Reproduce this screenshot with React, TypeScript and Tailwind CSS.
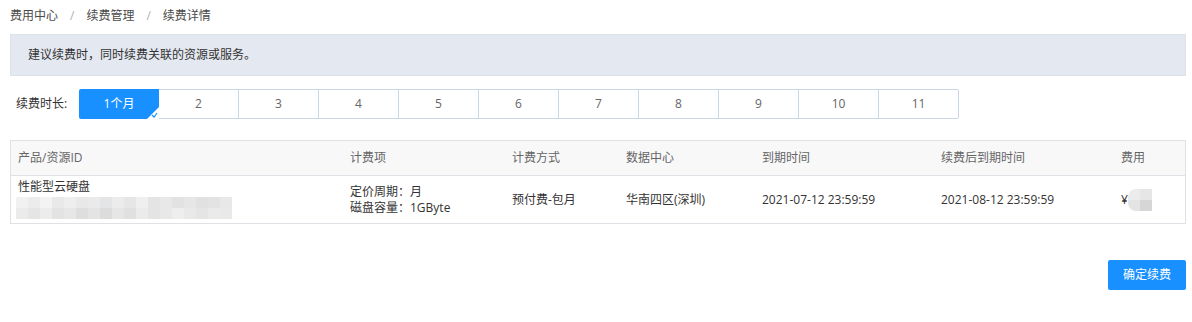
import React from "react";

const ff = { fontFamily: '"Open Sans", "Noto Sans CJK SC", sans-serif' };

function Blur({ cols }: { cols: string[][] }) {
  return (
    <div className="flex flex-col">
      {cols.map((row, i) => (
        <div key={i} className="flex">
          {row.map((c, j) => (
            <div key={j} className="h-[11px] w-[12px]" style={{ background: c }} />
          ))}
        </div>
      ))}
    </div>
  );
}

export default function App() {
  const months = ["1个月", "2", "3", "4", "5", "6", "7", "8", "9", "10", "11"];
  const r1 = ["#f1f1f1", "#ececec", "#f3f3f3", "#e9e9e9", "#eeeeee", "#e8e8e8", "#eaeaea", "#e3e5e6", "#ececec", "#e6e6e6", "#efefef", "#e4e4e4", "#e8e8e8", "#e2e2e2", "#e6e6e6", "#e1e1e1", "#e3e3e3", "#e8e8e8"];
  const r2 = ["#ebebeb", "#e5e5e5", "#ececec", "#e3e3e3", "#e7e7e7", "#dedede", "#e4e4e4", "#dcdcdc", "#e6e6e6", "#e0e0e0", "#ebebeb", "#e4e4e4", "#e8e8e8", "#eeeeee", "#e9e9e9", "#e5e5e5", "#eaeaea", "#e9e9e9"];
  return (
    <div className="w-[1192px] h-[322px] bg-white text-[12px] text-[#333]" style={ff}>
      <div className="h-[32px] px-[10px] flex items-center text-[#4a4a4a]">
        <span>费用中心</span>
        <span className="mx-[12px] text-[#b0b0b0]">/</span>
        <span>续费管理</span>
        <span className="mx-[12px] text-[#b0b0b0]">/</span>
        <span>续费详情</span>
      </div>
      <div className="mx-[10px] mr-[6px] mt-[2px] h-[42px] bg-[#e4e8f0] border border-[#dde1e8] flex items-center pl-[17px] text-[#333]">
        建议续费时，同时续费关联的资源或服务。
      </div>
      <div className="flex items-center mt-[13px] h-[30px]">
        <span className="ml-[16px] w-[63px] text-[#333]">续费时长:</span>
        <div className="flex">
          {months.map((m, i) =>
            i === 0 ? (
              <div key={i} className="relative w-[80px] h-[30px] bg-[#1890ff] text-white flex items-center justify-center rounded-l-[2px] overflow-hidden">
                {m}
                <div className="absolute right-0 bottom-0 w-0 h-0 border-l-[12px] border-l-transparent border-b-[12px] border-b-white" />
                <svg className="absolute right-[1px] bottom-[1px]" width="7" height="6" viewBox="0 0 7 6">
                  <path d="M1 3 L3 5 L6 1" stroke="#1890ff" strokeWidth="1.2" fill="none" />
                </svg>
              </div>
            ) : (
              <div
                key={i}
                className={`w-[80px] h-[30px] border-y border-r border-[#c9d6e6] text-[#666] flex items-center justify-center ${i === 10 ? "rounded-r-[2px]" : ""}`}
              >
                {m}
              </div>
            )
          )}
        </div>
      </div>
      <div className="mx-[10px] mr-[6px] mt-[21px] border border-[#dfe1e6]">
        <div className="h-[35px] bg-[#f8f8f9] border-b border-[#dfe1e6] flex items-center text-[#666]">
          <div className="w-[339px] pl-[7px]">产品/资源ID</div>
          <div className="w-[162px]">计费项</div>
          <div className="w-[114px]">计费方式</div>
          <div className="w-[136px]">数据中心</div>
          <div className="w-[179px]">到期时间</div>
          <div className="w-[180px]">续费后到期时间</div>
          <div>费用</div>
        </div>
        <div className="h-[47px] flex items-center text-[#333]">
          <div className="w-[339px] pl-[7px] flex flex-col">
            <span className="leading-[16px] mt-[-2px]">性能型云硬盘</span>
            <div className="mt-[2px] ml-[-2px]">
              <Blur cols={[r1, r2]} />
            </div>
          </div>
          <div className="w-[162px] flex flex-col leading-[16px]">
            <span>定价周期：月</span>
            <span>磁盘容量：1GByte</span>
          </div>
          <div className="w-[114px]">预付费-包月</div>
          <div className="w-[136px]">华南四区(深圳)</div>
          <div className="w-[179px]">2021-07-12 23:59:59</div>
          <div className="w-[180px]">2021-08-12 23:59:59</div>
          <div className="flex items-center">
            <span>¥</span>
            <div className="flex flex-col">
              <div className="flex">
                <div className="w-[12px] h-[11px] bg-[#ececec] rounded-tl-[8px]" />
                <div className="w-[12px] h-[11px] bg-[#e6e6e6]" />
              </div>
              <div className="flex">
                <div className="w-[12px] h-[11px] bg-[#e4e4e4] rounded-bl-[8px]" />
                <div className="w-[12px] h-[11px] bg-[#d6d6d6]" />
              </div>
            </div>
          </div>
        </div>
      </div>
      <div className="flex justify-end mr-[6px] mt-[36px]">
        <button className="w-[78px] h-[30px] bg-[#1890ff] text-white rounded-[2px] text-[12px]">确定续费</button>
      </div>
    </div>
  );
}
